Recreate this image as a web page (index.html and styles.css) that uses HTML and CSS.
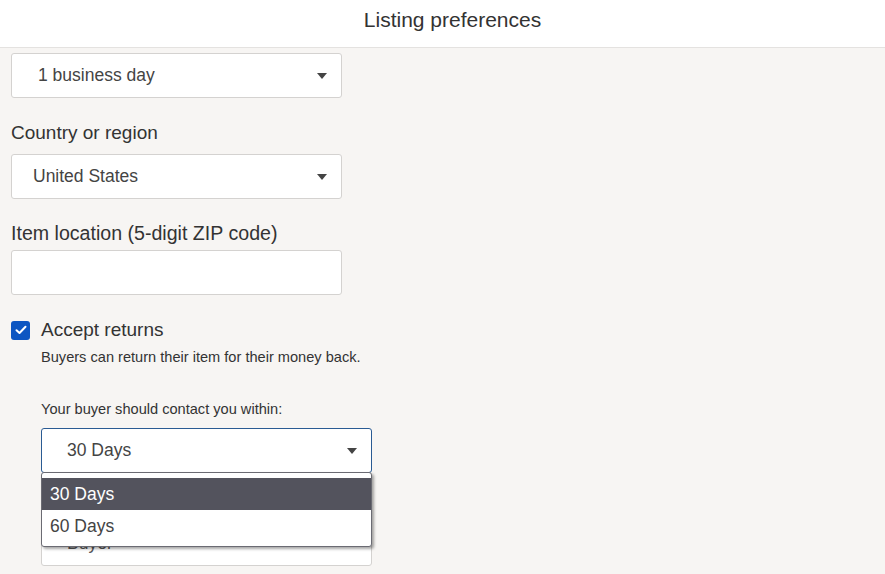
FILE: index.html
```html
<!DOCTYPE html>
<html>
<head>
<meta charset="utf-8">
<link rel="stylesheet" href="styles.css">
</head>
<body>
<header class="header"><h1 class="title">Listing preferences</h1></header>
<main class="content">
  <div class="select w330 first"><span class="val v1">1 business day</span><span class="caret"></span></div>
  <label class="label">Country or region</label>
  <div class="select w330"><span class="val v2">United States</span><span class="caret"></span></div>
  <label class="label label-tight">Item location (5-digit ZIP code)</label>
  <div class="select w330 input"></div>
  <div class="check-row">
    <span class="checkbox"><svg width="12" height="10" viewBox="0 0 12 10"><path d="M1.5 5.2 L4.5 8 L10.5 1.8" fill="none" stroke="#fff" stroke-width="2" stroke-linecap="round" stroke-linejoin="round"/></svg></span>
    <span class="check-label">Accept returns</span>
  </div>
  <div class="indent">
    <p class="hint">Buyers can return their item for their money back.</p>
    <p class="small-label">Your buyer should contact you within:</p>
    <div class="dd-wrap">
      <div class="select w330 focused"><span class="val v3">30 Days</span><span class="caret"></span></div>
      <div class="behind"><div class="select w330 back"><span class="val v3">Buyer</span></div></div>
      <ul class="menu">
        <li class="opt active">30 Days</li>
        <li class="opt">60 Days</li>
      </ul>
    </div>
  </div>
</main>
</body>
</html>
```
FILE: styles.css
```css
html, body { margin: 0; padding: 0; }
body {
  font-family: "Liberation Sans", Arial, sans-serif;
  background: #f7f5f3;
  color: #333;
  width: 885px;
  height: 574px;
  overflow: hidden;
}
.header {
  height: 47px;
  background: #fff;
  border-bottom: 1px solid #e4e2e0;
  display: flex;
  align-items: center;
  justify-content: center;
  padding-left: 20px;
}
.title {
  margin: 0;
  font-size: 21px;
  font-weight: normal;
  color: #333;
  position: relative;
  top: -13px;
  margin-top: 18px;
}
.content { padding: 5px 0 0 11px; }
.select {
  box-sizing: border-box;
  height: 45px;
  background: #fff;
  border: 1px solid #d4d2d0;
  border-radius: 3px;
  display: flex;
  align-items: center;
  position: relative;
}
.w330 { width: 331px; }
.val { font-size: 17.5px; color: #444; }
.v1 { padding-left: 26px; }
.v2 { padding-left: 21px; }
.v3 { padding-left: 25px; }
.caret {
  position: absolute;
  right: 14px;
  top: 19px;
  width: 0; height: 0;
  border-left: 5px solid transparent;
  border-right: 5px solid transparent;
  border-top: 6px solid #444;
}
.label {
  display: block;
  font-size: 19px;
  color: #333;
  margin: 24px 0 10px;
  line-height: 22px;
}
.label-tight { margin: 23px 0 6px; font-size: 19.6px; }
.check-row { display: flex; align-items: center; margin-top: 24px; height: 22px; }
.checkbox {
  box-sizing: border-box;
  width: 19px; height: 19px;
  background: #0d56c2;
  border-radius: 3px;
  display: flex; align-items: center; justify-content: center;
  margin-right: 11px;
}
.check-label { font-size: 19px; color: #333; }
.indent { padding-left: 30px; }
.hint { margin: 7px 0 0; font-size: 14.6px; line-height: 18px; color: #333; }
.small-label { margin: 34px 0 10px; font-size: 14.6px; line-height: 18px; color: #333; }
.dd-wrap { position: relative; }
.focused { border-color: #2a5b93; }
.behind { padding-top: 48px; }
.back .val { color: #555; }
.menu {
  position: absolute;
  left: 0; top: 44px;
  box-sizing: border-box;
  width: 331px;
  margin: 0;
  padding: 5px 0 4px;
  list-style: none;
  background: #fff;
  border: 1px solid #6b6b73;
  border-radius: 3px;
  box-shadow: 2px 2px 3px rgba(0,0,0,0.35);
}
.opt {
  height: 32px;
  line-height: 32px;
  padding-left: 8px;
  font-size: 17.5px;
  color: #444;
}
.opt.active { background: #53535d; color: #fff; }
```
